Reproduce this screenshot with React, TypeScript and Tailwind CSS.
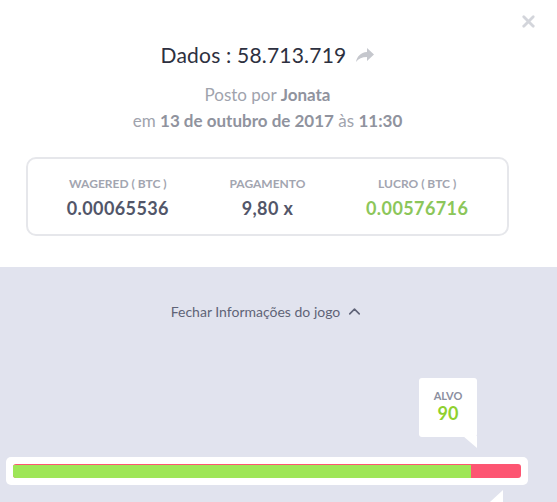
import { X, ChevronUp } from "lucide-react";

export default function App() {
  return (
    <div className="w-[557px] h-[502px] overflow-hidden bg-[#e1e3ee] font-['Lato',sans-serif]">
      {/* topo branco */}
      <div className="relative bg-white h-[267px]">
        <button className="absolute right-[19px] top-[12px] text-[#d3d5db]">
          <X size={19} strokeWidth={3.5} />
        </button>

        <div className="w-[535px] flex flex-col items-center pt-[41px]">
          <h1 className="flex items-center gap-[10px] text-[21px] text-[#2d3040] leading-[28px] tracking-[0.2px]">
            <span>Dados : 58.713.719</span>
            <svg width="18" height="14" viewBox="0 0 18 14" className="text-[#c5c7cd]">
              <path d="M11 0 L18 6.5 L11 13 V9 C6 9 2.5 10.5 0 14 C1 8.5 4.5 4.5 11 4 Z" fill="currentColor" />
            </svg>
          </h1>

          <p className="mt-[13px] text-[17px] leading-[26px] text-[#a0a3ad]">
            Posto por <b className="text-[#90939e] font-bold">Jonata</b>
          </p>
          <p className="text-[17px] leading-[26px] text-[#a0a3ad]">
            em <b className="text-[#90939e] font-bold">13 de outubro de 2017</b> às{" "}
            <b className="text-[#90939e] font-bold">11:30</b>
          </p>

          {/* card */}
          <div className="mt-[23px] w-[483px] h-[79px] rounded-[10px] border-2 border-[#e6e7eb] grid grid-cols-3 px-[15px] items-center">
            <div className="flex flex-col items-center pt-[2px]">
              <span className="text-[12px] font-bold text-[#a2a5b0] leading-[14px]">WAGERED ( BTC )</span>
              <span className="mt-[6px] text-[18px] font-bold text-[#525669] leading-[22px] tracking-[0.4px]">0.00065536</span>
            </div>
            <div className="flex flex-col items-center pt-[2px]">
              <span className="text-[12px] font-bold text-[#a2a5b0] leading-[14px]">PAGAMENTO</span>
              <span className="mt-[6px] text-[18px] font-bold text-[#525669] leading-[22px] tracking-[0.4px]">9,80 x</span>
            </div>
            <div className="flex flex-col items-center pt-[2px]">
              <span className="text-[12px] font-bold text-[#a2a5b0] leading-[14px]">LUCRO ( BTC )</span>
              <span className="mt-[6px] text-[18px] font-bold text-[#8cc65a] leading-[22px] tracking-[0.4px]">0.00576716</span>
            </div>
          </div>
        </div>
      </div>

      {/* parte inferior */}
      <div className="relative h-[235px]">
        <div className="w-[535px] flex justify-center pt-[34px]">
          <button className="flex items-center gap-[5px] text-[14px] text-[#5f6377]">
            Fechar Informações do jogo
            <ChevronUp size={19} strokeWidth={2} />
          </button>
        </div>

        {/* alvo */}
        <div className="absolute left-[419px] top-[111px] w-[58px] h-[59px] bg-white rounded-[3px] flex flex-col items-center pt-[12px]">
          <span className="text-[11px] font-bold text-[#8c8fa0] leading-[12px]">ALVO</span>
          <span className="text-[18px] font-bold text-[#8fd12f] leading-[22px]">90</span>
          <div className="absolute right-0 top-[58px] w-0 h-0 border-l-[14px] border-l-transparent border-t-[12px] border-t-white" />
        </div>

        {/* barra */}
        <div className="absolute left-[6px] top-[190px] w-[522px] h-[28px] bg-white rounded-[5px] px-[7px] py-[7px]">
          <div className="h-[14px] rounded-[3px] bg-[#fd5572] overflow-hidden flex">
            <div className="w-[458px] mt-[1px] bg-[#9ee657]" />
          </div>
        </div>

        <div className="absolute left-[490px] top-[223px] w-0 h-0 border-l-[13px] border-l-transparent border-b-[12px] border-b-white" />
      </div>
    </div>
  );
}
